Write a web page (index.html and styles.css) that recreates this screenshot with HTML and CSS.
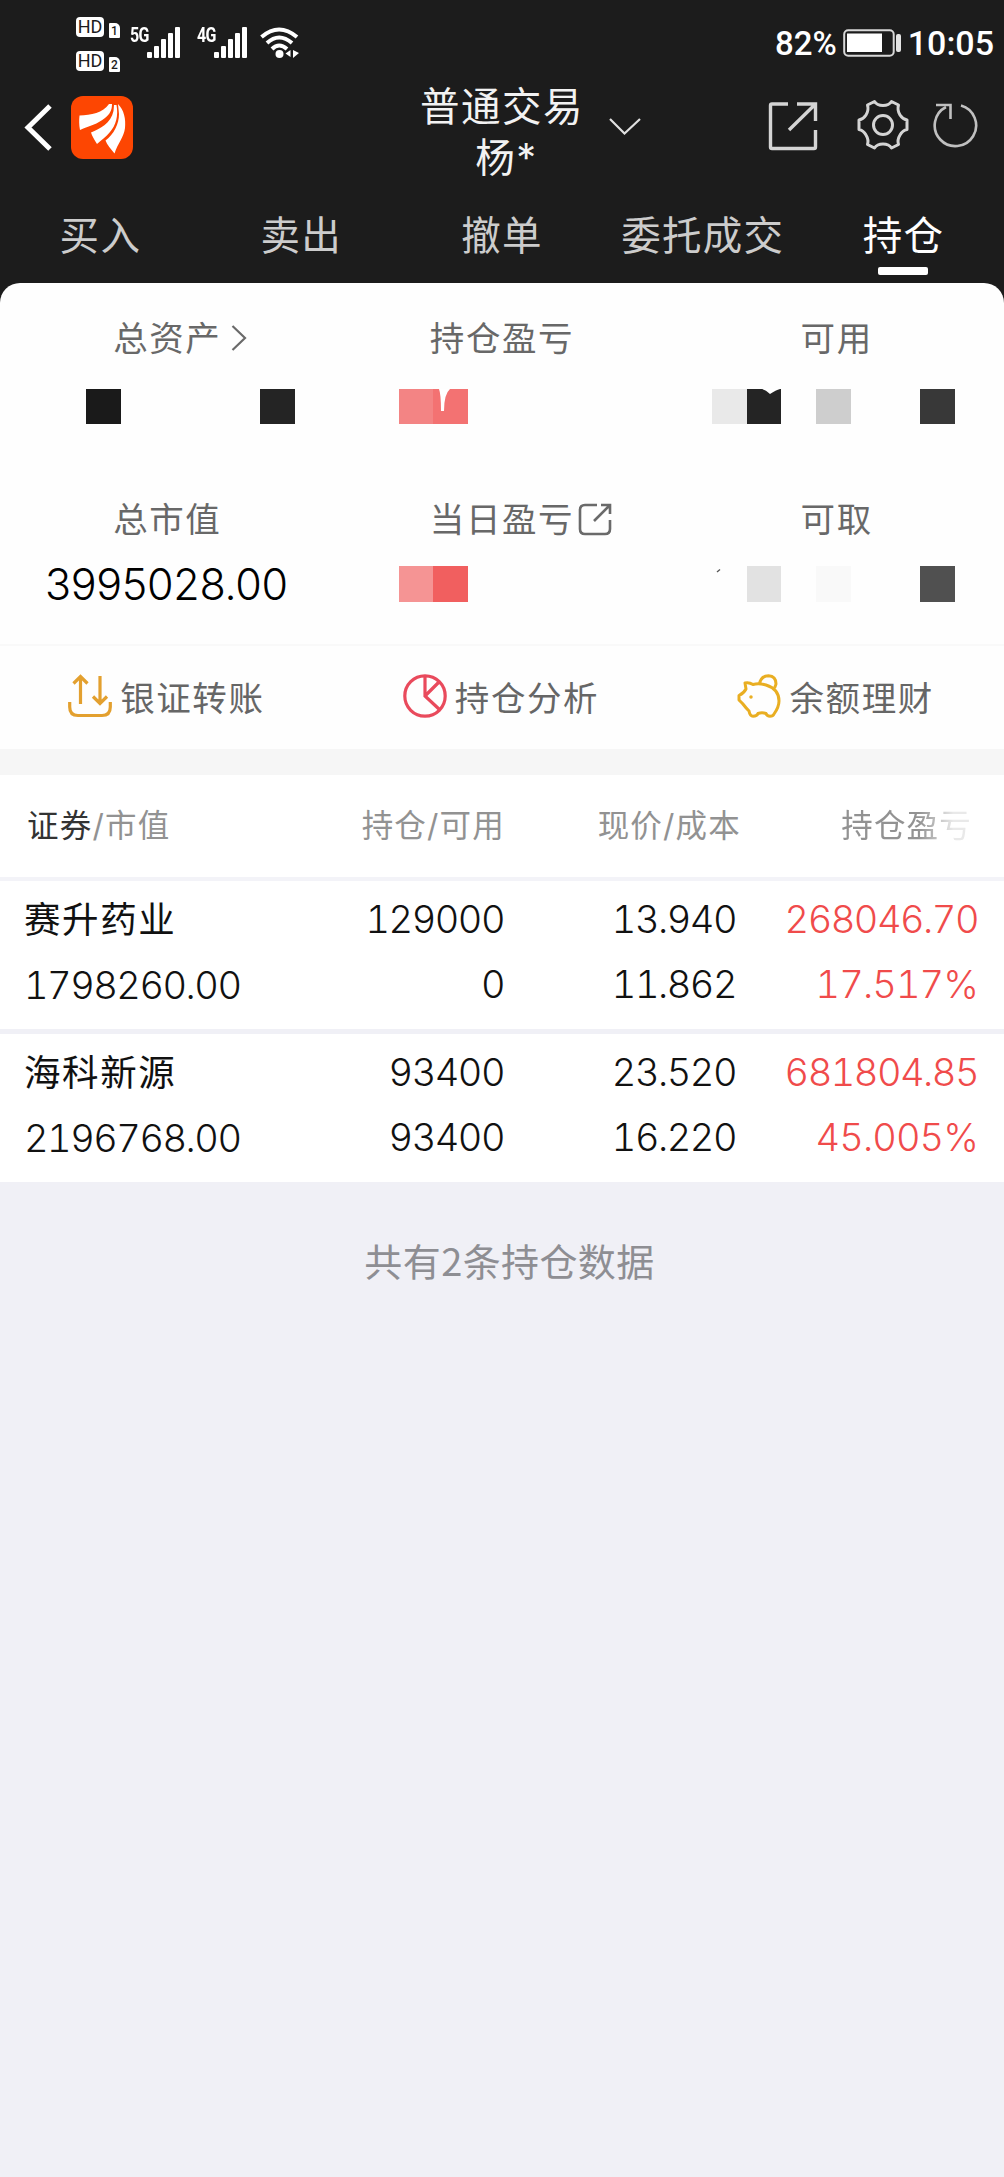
FILE: index.html
```html
<!DOCTYPE html>
<html lang="zh-CN">
<head>
  <meta charset="UTF-8" />
  <meta name="viewport" content="width=device-width, initial-scale=1.0"/>
  <title>持仓</title>
  <link rel="stylesheet" href="styles.css">
</head>
<body>
  <header class="top">
    <div class="status-bar">
      <div class="hd-list">
        <div class="hd-row">
          <span class="hd">HD</span>
          <span class="sim">1</span>
        </div>
        <div class="hd-row">
          <span class="hd">HD</span>
          <span class="sim">2</span>
        </div>
      </div>
      <div class="signal">
        <span class="net">5G</span>
        <svg class="bars" width="34" height="32" viewBox="0 0 34 32" fill="#fff">
          <rect x="0" y="25" width="5" height="6" rx="1"/><rect x="7" y="19" width="5" height="12" rx="1"/><rect x="14" y="12" width="5" height="19" rx="1"/><rect x="21" y="6" width="5" height="25" rx="1"/><rect x="28" y="0" width="5" height="31" rx="1"/>
        </svg>
      </div>
      <div class="signal">
        <span class="net">4G</span>
        <svg class="bars" width="34" height="32" viewBox="0 0 34 32" fill="#fff">
          <rect x="0" y="25" width="5" height="6" rx="1"/><rect x="7" y="19" width="5" height="12" rx="1"/><rect x="14" y="12" width="5" height="19" rx="1"/><rect x="21" y="6" width="5" height="25" rx="1"/><rect x="28" y="0" width="5" height="31" rx="1"/>
        </svg>
      </div>
      <svg class="wifi" width="40" height="32" viewBox="0 0 40 32">
        <g fill="none" stroke="#fff" stroke-width="4">
          <path d="M1.500 10 Q19 -5 37 10"/>
          <path d="M7 16 Q19 5 32 16"/>
          <path d="M12 22 Q19 15 27 22"/>
        </g>
        <circle cx="19.500" cy="27" r="4" fill="#fff"/>
        <path d="M30.500 23v7l-5-3.500zM33 23v8l6-5z" fill="#fff"/>
      </svg>
      <div class="status-right">
        <span class="battery-text">82%</span>
        <svg width="58" height="28" viewBox="0 0 58 28">
          <rect x="1.200" y="1.200" width="49.500" height="25.500" rx="4" fill="none" stroke="#d8d8d8" stroke-width="2"/>
          <rect x="4" y="4.500" width="35" height="18.500" fill="#fff"/>
          <rect x="53" y="5" width="5" height="18" rx="2" fill="#e4e4e4"/>
        </svg>
        <span class="clock">10:05</span>
      </div>
    </div>

    <div class="nav-bar">
      <div class="nav-left">
        <svg width="30" height="48" viewBox="0 0 30 48" fill="none" stroke="#fff" stroke-width="5">
          <path d="M26 3 L4 24.500 L26 46"/>
        </svg>
        <svg class="logo" width="62" height="63" viewBox="0 0 62 63">
          <rect width="62" height="63" rx="12" fill="#fd4602"/>
          <g fill="#fff">
            <path d="M8.500 19.500 C20 19 32 17 38 8 L41 8 C41 14 39 18 34 22 C27 28 18 30 9 34 C8 29 8 24 8.500 19.500Z"/>
            <path d="M20 36.500 C29 33 40 27 42.500 15 L43 9 L45.500 9 C47.500 20 45 29 39 36 C35 41 30 44 26 48 C23.500 44 21 40 20 36.500Z"/>
            <path d="M34.500 44.500 C43 38 48 28 48 18 L47 8 C53 14 55 23 54 32 C53 41 47 47 43.500 57.500 C40 53 36 49 34.500 44.500Z"/>
          </g>
        </svg>
      </div>
      <div class="account">
        <div class="account-name">
          <div>普通交易</div>
          <div class="account-user">杨*</div>
        </div>
        <svg class="account-arrow" width="32" height="18" viewBox="0 0 32 18" fill="none" stroke="#e0e0e0" stroke-width="2.200">
          <path d="M1 1 L15.500 15.500 L31 1"/>
        </svg>
      </div>
      <div class="nav-tools">
        <svg width="50" height="50" viewBox="0 0 50 50" fill="none" stroke="#d4d4d4" stroke-width="3.400">
          <path d="M20 3 H4 Q2.500 3 2.500 4.500 V46 Q2.500 47.500 4 47.500 H46 Q47.500 47.500 47.500 46 V29"/>
          <path d="M29 3 H47.500 V20 M46.500 4 L21 29"/>
        </svg>
        <svg class="gear" width="52" height="52" viewBox="0 0 52 52" fill="none" stroke="#d4d4d4" stroke-width="3">
          <path d="M17.500 2.500 Q20 6.500 26 6.500 Q32 6.500 34.500 2.500 L41.500 6 Q40 11 43 16 Q45.500 20 50 21 V30.500 Q45.500 31.500 43 36 Q40 41 41.500 45.500 L34.500 49 Q32 45 26 45 Q20 45 17.500 49 L10.500 45.500 Q12 41 9 36 Q6.500 31.500 2 30.500 V21 Q6.500 20 9 16 Q12 11 10.500 6 Z" stroke-linejoin="round"/>
          <circle cx="26" cy="26" r="9.500"/>
        </svg>
        <svg class="refresh" width="46" height="48" viewBox="0 0 46 48" fill="none" stroke="#c0c0c0" stroke-width="2.600">
          <path d="M28 4.500 A20.700 20.700 0 1 1 13 6"/>
          <path d="M3 4 H17.500 V18"/>
        </svg>
      </div>
    </div>

    <nav class="tabs">
      <a class="tab">买入</a>
      <a class="tab">卖出</a>
      <a class="tab">撤单</a>
      <a class="tab">委托成交</a>
      <a class="tab active">持仓</a>
    </nav>
  </header>

  <main>
    <section class="summary">
      <div class="stats">
        <div class="stat">
          <div class="stat-label">总资产
            <svg class="label-arrow" width="16" height="26" viewBox="0 0 16 26" fill="none" stroke="#6a6a6a" stroke-width="2.200"><path d="M1.500 1 L14 13 L1.500 25"/></svg>
          </div>
          <div class="mosaic mosaic-a">
            <i class="c1a"></i><i></i><i></i><i></i><i></i><i class="c24"></i>
          </div>
        </div>
        <div class="stat">
          <div class="stat-label">持仓盈亏</div>
          <div class="mosaic mosaic-b">
            <i class="red1"></i><i class="red2"><svg width="35" height="36" viewBox="0 0 35 36" fill="#fff"><path d="M6 0 H17 Q11 5 11 22 H8 Q8 5 6 0Z"/></svg></i>
          </div>
        </div>
        <div class="stat">
          <div class="stat-label">可用</div>
          <div class="mosaic mosaic-c">
            <i class="ce9"></i><i class="c24"><svg width="35" height="36" viewBox="0 0 35 36" fill="#fff"><path d="M15 0 H33 Q29 1 23 5 Q19 1 15 0Z"/></svg></i><i></i><i class="cce"></i><i></i><i></i><i class="c38"></i>
          </div>
        </div>
        <div class="stat">
          <div class="stat-label">总市值</div>
          <div class="stat-value">3995028.00</div>
        </div>
        <div class="stat">
          <div class="stat-label">当日盈亏
            <svg class="label-link" width="34" height="34" viewBox="0 0 34 34" fill="none" stroke="#6a6a6a" stroke-width="2.600">
              <path d="M19 2 H7 Q2 2 2 7 V26 Q2 31 7 31 H27 Q32 31 32 26 V17"/>
              <path d="M23 2 H32 V11 M31.500 2.500 L16 18"/>
            </svg>
          </div>
          <div class="mosaic mosaic-b">
            <i class="red3"></i><i class="red4"></i>
          </div>
        </div>
        <div class="stat">
          <div class="stat-label">可取</div>
          <div class="mosaic mosaic-c">
            <i class="speck"><svg width="12" height="10" viewBox="0 0 12 10" stroke="#555" stroke-width="1.300"><path d="M5 6 L8 3.500"/></svg></i><i class="ce2"></i><i></i><i class="cf9"></i><i></i><i></i><i class="c50"></i>
          </div>
        </div>
      </div>

      <div class="actions">
        <a class="action">
          <svg width="44" height="44" viewBox="0 0 44 44" fill="none" stroke="#e3a02f" stroke-width="3.200">
            <path d="M1.700 28 V33 Q1.700 41.500 10 41.500 H34 Q42.300 41.500 42.300 33 V28"/>
            <path d="M12.500 30 V3 M5.500 9.500 L12.500 2.500 L19.500 9.500"/>
            <path d="M32 2 V29 M25 22.500 L32 29.500 L39 22.500"/>
          </svg>
          银证转账
        </a>
        <a class="action">
          <svg width="44" height="44" viewBox="0 0 44 44" fill="none" stroke="#e94a5c" stroke-width="3.200">
            <circle cx="22" cy="22" r="20.200"/>
            <path d="M22 2 V22 L37 36 M22 22 L36 8"/>
          </svg>
          持仓分析
        </a>
        <a class="action">
          <svg width="44" height="44" viewBox="0 0 44 44" fill="none" stroke="#e9ae22" stroke-width="3" stroke-linejoin="round">
            <path d="M8 9 Q12 8 16 10.500 Q22 9 29 11 Q42 15 42 27 Q42 33 37 40 Q36 42.300 33 42.300 Q30 42.300 29 39.500 Q25 38 21 39.500 Q20 42.300 16 42.300 Q13 42.300 12 37 Q9 34 5.500 29.500 L2 26 V21.500 Q7 19 9 15 Z"/>
            <path d="M22.500 10 Q24 1.700 31.500 1.700 Q39 2 39 10 Q38.500 12 37.500 14"/>
            <circle cx="14" cy="23" r="1" fill="#e9ae22" stroke-width="1.500"/>
          </svg>
          余额理财
        </a>
      </div>
    </section>

    <section class="holdings">
      <div class="row head">
        <div><b>证券</b>/市值</div>
        <div>持仓/可用</div>
        <div>现价/成本</div>
        <div class="fade">持仓盈亏</div>
      </div>
      <div class="row item">
        <div><span class="name">赛升药业</span><br>1798260.00</div>
        <div>129000<br>0</div>
        <div>13.940<br>11.862</div>
        <div class="up">268046.70<br><span class="rate">17.517%</span></div>
      </div>
      <div class="row item">
        <div><span class="name">海科新源</span><br>2196768.00</div>
        <div>93400<br>93400</div>
        <div>23.520<br>16.220</div>
        <div class="up">681804.85<br><span class="rate">45.005%</span></div>
      </div>
    </section>

    <p class="total">共有2条持仓数据</p>
  </main>
</body>
</html>
```
FILE: styles.css
```css
* { margin: 0; padding: 0; box-sizing: border-box; }

:root {
  --dark: #1c1c1c;
  --grey: #f0f0f6;
  --text: #111;
  --label: #686868;
  --muted: #929292;
  --red: #f04b4b;
}

body {
  font-family: Inter, "Noto Sans CJK SC", sans-serif;
  background: var(--grey);
  color: var(--text);
  min-height: 2177px;
}

svg { display: block; flex: none; }

.top {
  background: var(--dark);
  height: 305px;
  color: #fff;
}

/* status bar */
.status-bar {
  height: 84px;
  display: flex;
  align-items: flex-start;
  padding: 17px 10px 0 76px;
  font-family: Roboto, sans-serif;
}

.hd-list {
  width: 54px;
  display: flex;
  flex-direction: column;
  gap: 14px;
}

.hd-row {
  display: flex;
  align-items: flex-end;
  gap: 5px;
  height: 20px;
}

.hd {
  width: 28px;
  height: 20px;
  border-radius: 4px;
  background: #fff;
  color: var(--dark);
  font-size: 18px;
  line-height: 20px;
  text-align: center;
}

.sim {
  width: 11px;
  height: 15px;
  border-radius: 1px 5px 1px 1px;
  background: #fff;
  color: var(--dark);
  font-size: 12px;
  font-weight: 500;
  line-height: 16px;
  text-align: center;
  position: relative;
  top: 1px;
}

.signal {
  display: flex;
  align-items: flex-start;
  width: 67px;
  padding-top: 10px;
}

.net {
  width: 17px;
  font: bold 20px/16px Roboto, sans-serif;
  letter-spacing: -1px;
  transform: scaleX(.8);
  transform-origin: left;
}

.wifi { margin: 10px 0 0 -4px; }

.status-right {
  margin-left: auto;
  display: flex;
  align-items: center;
  height: 52px;
  font-size: 34px;
  font-weight: 500;
}

.battery-text {
  font-size: 33px;
  margin-right: 6px;
}

.clock { margin-left: 7px; }

/* title */
.nav-bar {
  height: 110px;
  display: grid;
  grid-template-columns: 1fr 160px 1fr;
}

.nav-left {
  display: flex;
  align-items: flex-start;
  gap: 17px;
  padding: 12px 0 0 24px;
}

.nav-left svg:first-child { margin-top: 7px; }

.account { position: relative; }

.account-name {
  font-size: 39.5px;
  line-height: 51px;
  letter-spacing: 1.5px;
  text-align: center;
  white-space: nowrap;
  margin: -2px -10px 0;
  color: #f2f2f2;
}

.account-user { padding-left: 9px; }

.account-arrow {
  position: absolute;
  left: 187px;
  top: 34px;
}

.nav-tools {
  display: flex;
  justify-content: flex-end;
  align-items: flex-start;
  padding: 17px 25px 0 0;
}

.gear { margin: -2px 24px 0 39px; }

/* tabs */
.tabs {
  display: grid;
  grid-template-columns: repeat(5, 1fr);
  height: 89px;
}

.tab {
  position: relative;
  font-size: 39.5px;
  line-height: 84px;
  letter-spacing: 1.3px;
  text-align: center;
  color: #ccc;
}

.tab.active { color: #fff; }

.tab.active::after {
  content: "";
  position: absolute;
  left: 50%;
  bottom: 8px;
  width: 50px;
  height: 8px;
  margin-left: -26px;
  border-radius: 2px;
  background: #fff;
}

/* summary */
.summary {
  margin-top: -22px;
  background: #fefefe;
  border-radius: 20px 20px 0 0;
  border-bottom: 26px solid #f6f6f6;
}

.stats {
  display: grid;
  grid-template-columns: repeat(3, 1fr);
  grid-template-rows: 180px 181px;
  border-bottom: 2px solid #f9f9f9;
}

.stat {
  display: flex;
  flex-direction: column;
  padding-top: 31px;
}

.stat:nth-child(n+4) { padding-top: 32px; }

.stat-label {
  position: relative;
  align-self: center;
  height: 50px;
  font-size: 34.5px;
  line-height: 50px;
  letter-spacing: 1.6px;
  white-space: nowrap;
  color: var(--label);
}

.label-arrow {
  position: absolute;
  left: 118px;
  top: 11px;
}

.label-link {
  position: absolute;
  left: 148px;
  top: 8px;
}

.stat-value {
  margin-top: 13px;
  padding-right: 2px;
  font-size: 43px;
  font-weight: 350;
  line-height: 52px;
  letter-spacing: -.3px;
  text-align: center;
  color: #000;
}

.mosaic {
  display: grid;
  grid-auto-flow: column;
  grid-auto-columns: 34.75px;
  height: 35.500px;
  margin-top: 24.500px;
}

.stat:nth-child(n+4) .mosaic { margin-top: 21px; }

.mosaic i { overflow: hidden; }
.mosaic-a { padding-left: 86px; }
.mosaic-b { padding-left: 64px; }
.mosaic-c { padding-left: 42.500px; }

.c1a { background: #1a1a1a; }
.c24 { background: #242424; }
.c38 { background: #383838; }
.c50 { background: #505050; }
.cce { background: #cecece; }
.ce2 { background: #e2e2e2; }
.ce9 { background: #e9e9e9; }
.cf9 { background: #f9f9f9; }
.red1 { background: #f38484; }
.red2 { background: #f37272; }
.red3 { background: #f59494; }
.red4 { background: #f15f5f; }

.actions {
  display: grid;
  grid-template-columns: repeat(3, 1fr);
  height: 103px;
  padding-bottom: 3px;
}

.action {
  display: flex;
  align-items: center;
  justify-content: center;
  gap: 8px;
  padding-right: 2px;
  font-size: 34.5px;
  letter-spacing: 1.6px;
  color: #666;
}

/* holdings */
.row {
  display: grid;
  grid-template-columns: 234px 246px 232px 242px;
  padding-left: 24px;
  background: #fff;
}

.row > div { text-align: right; white-space: nowrap; }
.row > div:first-child { text-align: left; }

.head {
  grid-template-columns: 236px 245px 236px 231px;
  height: 106px;
  font-size: 31.500px;
  line-height: 102px;
  letter-spacing: 1.200px;
  color: var(--muted);
  border-bottom: 4px solid #f3f3f8;
}

.head > div:first-child { padding-left: 3px; }

.head b {
  font-weight: 400;
  color: #333;
}

.fade {
  -webkit-mask-image: linear-gradient(90deg, #000 77%, rgba(0, 0, 0, .2) 92%);
  mask-image: linear-gradient(90deg, #000 77%, rgba(0, 0, 0, .2) 92%);
}

.item {
  height: 153px;
  padding-top: 6px;
  font-size: 38px;
  font-weight: 350;
  line-height: 65px;
  letter-spacing: -1.500px;
  font-feature-settings: "tnum";
  border-bottom: 5px solid var(--grey);
}

.name {
  font-size: 36.500px;
  font-weight: 400;
  letter-spacing: 1.600px;
}

.up { color: var(--red); }

.rate { letter-spacing: -.9px; }

.total {
  margin-top: 43px;
  padding-left: 15px;
  font-family: "Noto Sans CJK SC", sans-serif;
  font-size: 38px;
  line-height: 60px;
  letter-spacing: .4px;
  text-align: center;
  color: #8e8e93;
}
```
